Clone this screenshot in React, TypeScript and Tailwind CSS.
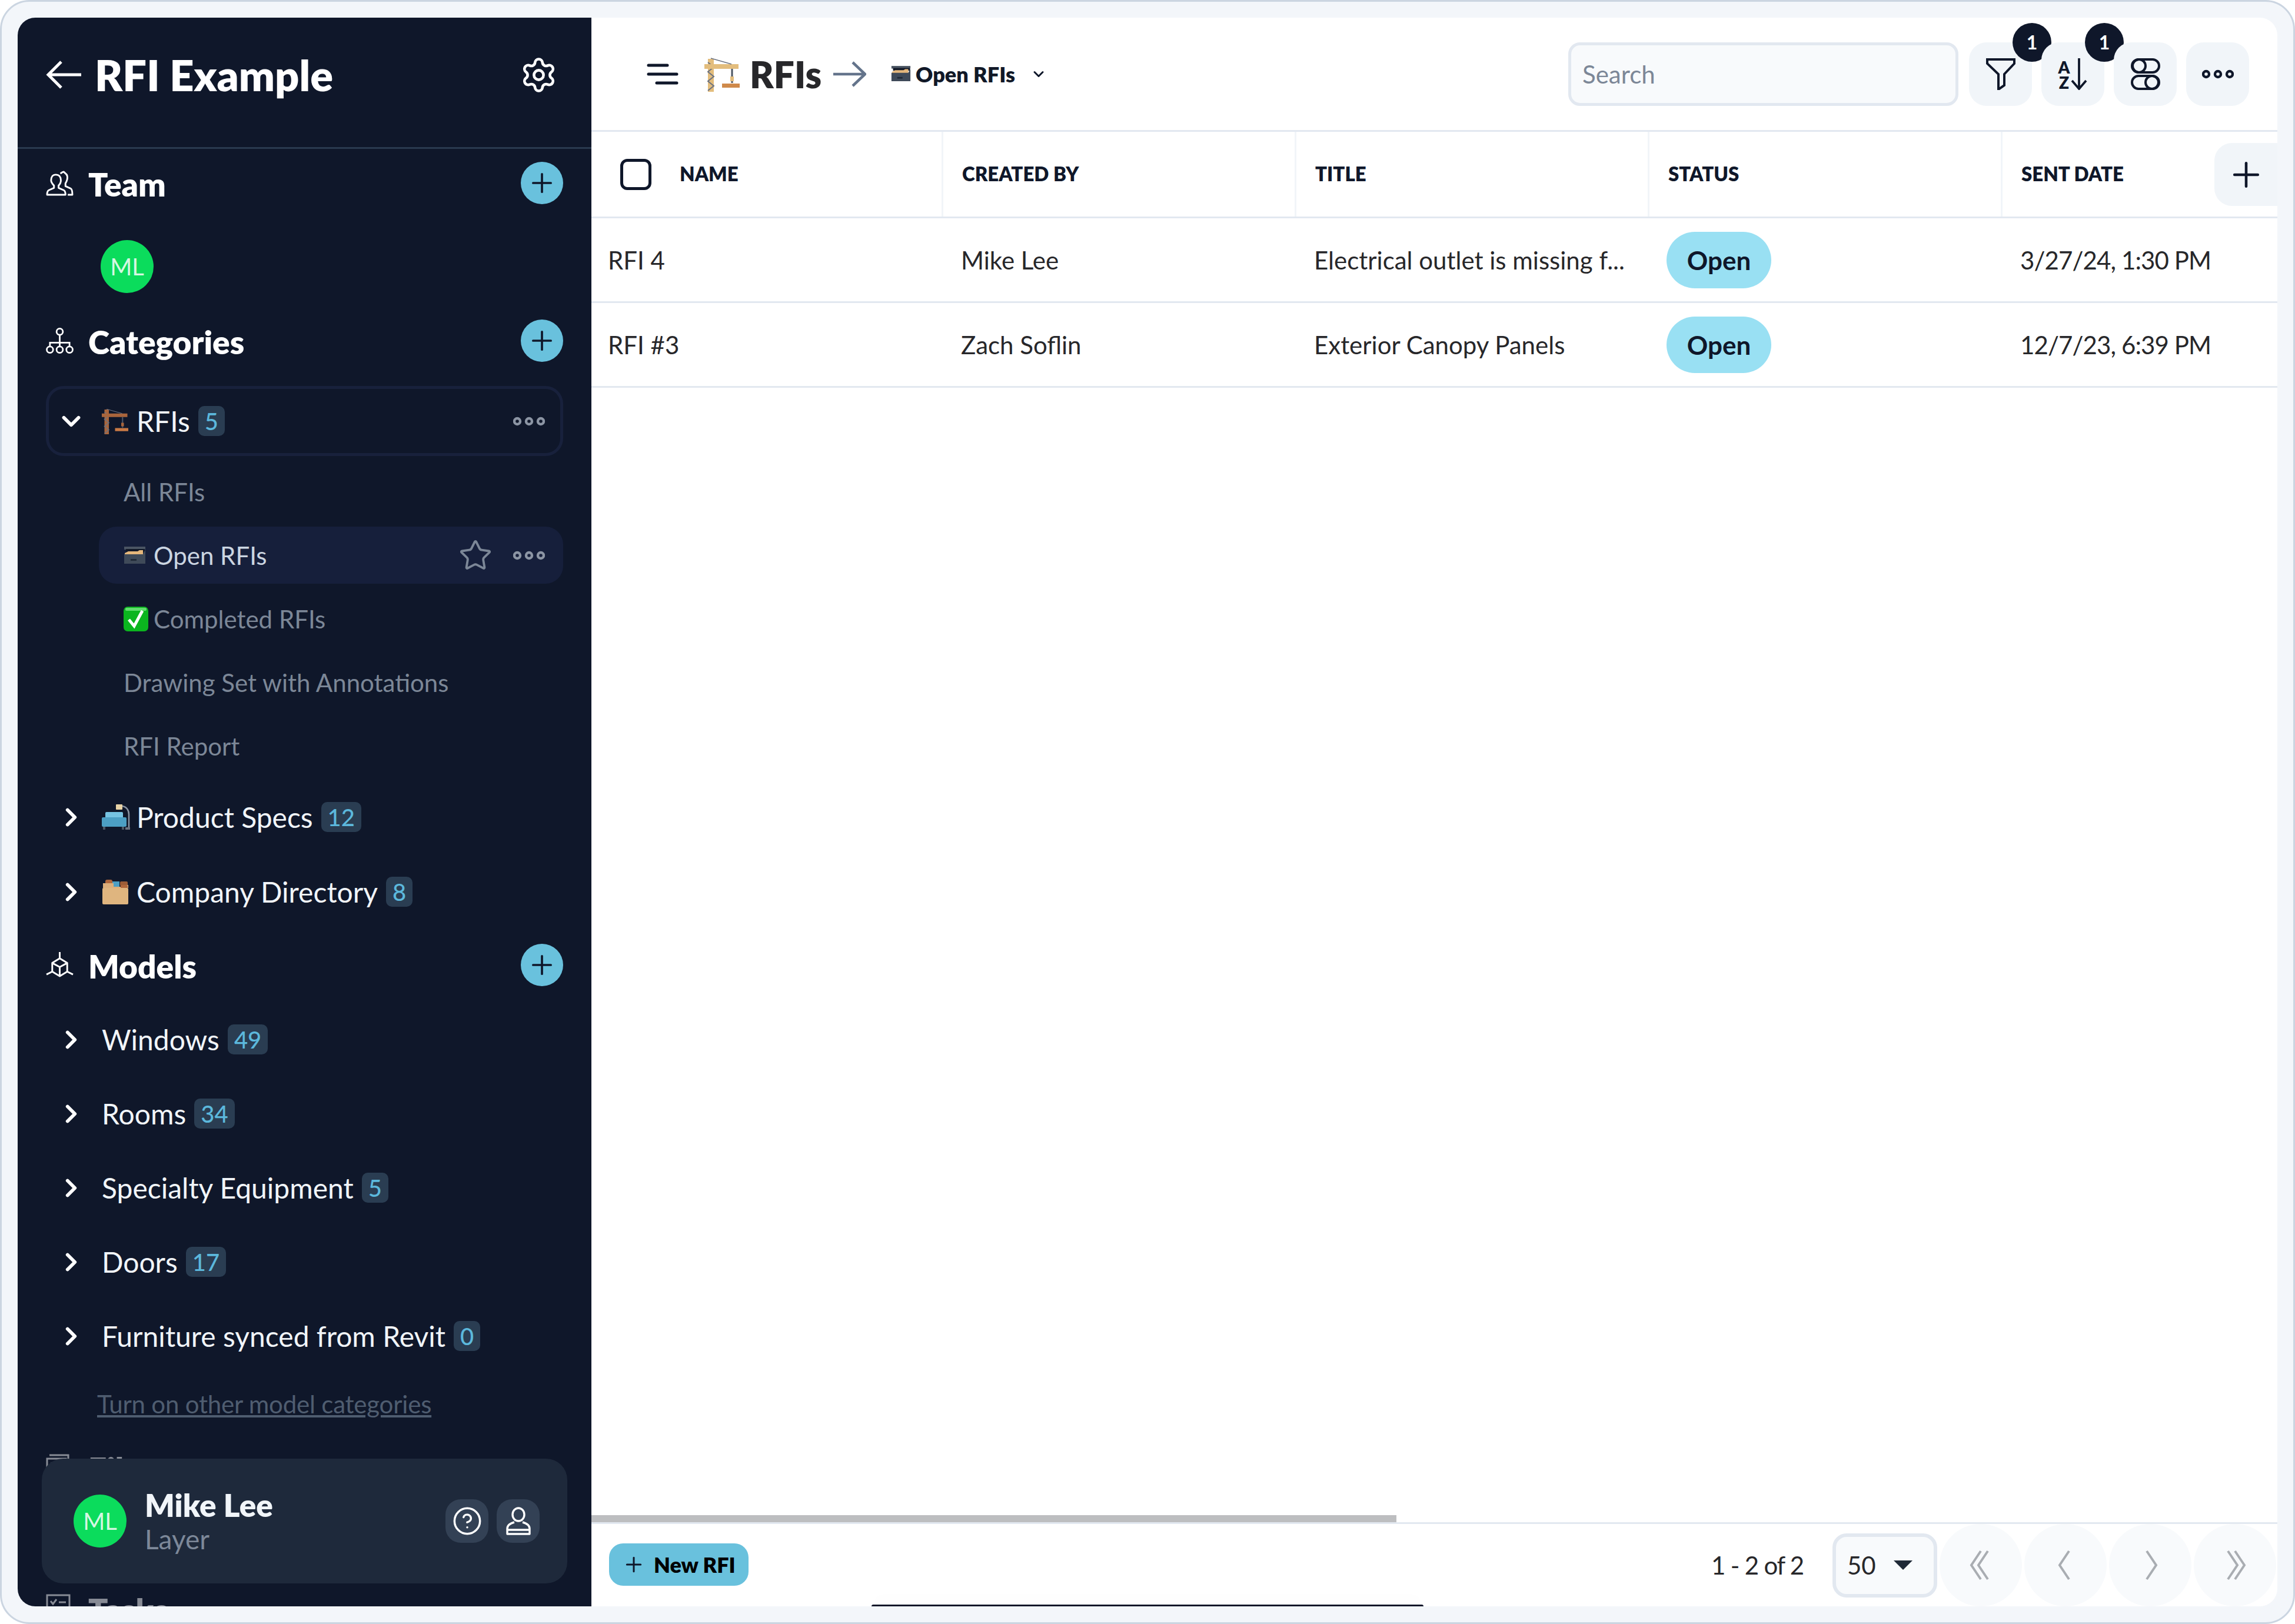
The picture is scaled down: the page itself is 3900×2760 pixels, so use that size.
import { ChevronDown, ChevronRight, CircleHelp, Plus, Settings, Star } from 'lucide-react';
import type { ReactNode } from 'react';

function Crane({ mast = '#a9653c', load = '#c87a45', className = 'w-[45px] h-[45px]' }: { mast?: string; load?: string; className?: string }) {
  return (
    <svg viewBox="0 0 60 60" className={`${className} shrink-0`}>
      <rect x="6" y="4" width="10" height="56" fill={mast} />
      <path d="M6 10l10 8M16 18L6 26l10 8-10 8 10 8-10 8" stroke="#6b7280" strokeWidth="2" fill="none" />
      <rect x="0" y="13" width="58" height="8" fill={mast} />
      <path d="M11 3L46 13" stroke="#6b7280" strokeWidth="1.5" />
      <path d="M47 21v24" stroke="#4b5563" strokeWidth="3" />
      <rect x="44" y="34" width="6" height="8" fill={mast} />
      <rect x="30" y="46" width="31" height="7" fill={load} />
    </svg>
  );
}

function FileBox({ className }: { className: string }) {
  return (
    <svg viewBox="0 0 38 32" className={className}>
      <rect x="1" y="1" width="36" height="5" fill="#4b5563" />
      <rect x="4" y="5" width="32" height="5" fill="#111827" />
      <path d="M2 12l6-3h16l3-2h6v8H2z" fill="#e5b77c" />
      <path d="M1 14h32l4-8v24H1z" fill="#3f4a59" />
      <rect x="12" y="22" width="10" height="3" fill="#1f2937" />
    </svg>
  );
}

function Couch() {
  return (
    <svg viewBox="0 0 48 46" className="w-[48px] h-[46px] shrink-0">
      <rect x="24" y="1" width="11" height="9" rx="1" fill="#e8d3a6" />
      <path d="M35 4c7 1 11 7 11 14v24" stroke="#8a94a3" strokeWidth="2.5" fill="none" />
      <rect x="40" y="40" width="8" height="4" fill="#6b7280" />
      <rect x="6" y="14" width="30" height="16" rx="2" fill="#76c3e2" />
      <rect x="0" y="23" width="42" height="16" rx="2" fill="#4c9fc4" />
      <rect x="2" y="39" width="4" height="5" fill="#4b5563" />
      <rect x="34" y="39" width="4" height="5" fill="#4b5563" />
    </svg>
  );
}

function Box() {
  return (
    <svg viewBox="0 0 46 42" className="w-[46px] h-[42px] shrink-0">
      <rect x="6" y="0" width="12" height="8" rx="3" fill="#b0673c" />
      <rect x="18" y="3" width="12" height="12" fill="#4c9fc4" />
      <rect x="31" y="3" width="13" height="8" rx="2" fill="#9c5c36" />
      <path d="M2 6l18 0v6h14l2-3h9v5H2z" fill="#dcae7a" />
      <rect x="32" y="9" width="12" height="7" rx="2" fill="#b0673c" />
      <rect x="1" y="14" width="44" height="28" rx="2" fill="#dfb57f" />
    </svg>
  );
}

function CheckEmoji() {
  return (
    <svg viewBox="0 0 42 42" className="w-[42px] h-[42px] shrink-0">
      <rect x="0" y="0" width="42" height="42" rx="7" fill="#0bb51f" />
      <rect x="3" y="2" width="36" height="5" rx="2" fill="#62dd6e" />
      <path d="M9 22l9 11 14-26" stroke="#fff" strokeWidth="5" fill="none" />
    </svg>
  );
}

function Dots({ color = '#8c95a4' }: { color?: string }) {
  return (
    <svg viewBox="0 0 54 16" className="w-[54px] h-[16px] shrink-0" fill="none" stroke={color} strokeWidth="4.4">
      <circle cx="7" cy="8" r="5" />
      <circle cx="27" cy="8" r="5" />
      <circle cx="47" cy="8" r="5" />
    </svg>
  );
}

function TeamIcon() {
  return (
    <svg viewBox="0 0 48 44" className="w-[47px] h-[43px] shrink-0" fill="none" stroke="#fff" strokeWidth="3" strokeLinejoin="round">
      <path d="M17 7c6 0 9 4 9 10 0 4-2 7-4 9v4l9 4c2 1 3 4 3 8H2c0-4 1-7 3-8l9-4v-4c-2-2-5-5-5-9 0-6 3-10 8-10z" />
      <path d="M25 5c2-1 4-3 6-3 1 2 5 3 6 7 1 5-1 10-3 13v5l9 4c2 1 3 4 3 11h-8" />
    </svg>
  );
}

function TreeIcon() {
  return (
    <svg viewBox="0 0 48 46" className="w-[47px] h-[45px] shrink-0" fill="none" stroke="#fff" strokeWidth="2.8">
      <circle cx="24" cy="7" r="5.5" />
      <path d="M24 13v13M7 32v-6h34v6M24 26v6" />
      <circle cx="7" cy="38" r="5.5" />
      <circle cx="24" cy="38" r="5.5" />
      <circle cx="41" cy="38" r="5.5" />
    </svg>
  );
}

function CubeIcon() {
  return (
    <svg viewBox="0 0 48 46" className="w-[47px] h-[45px] shrink-0" fill="none" stroke="#fff" strokeWidth="3" strokeLinejoin="round">
      <path d="M24 0v11M24 11l13 8v15l-13 8-13-8V19zM11 19l13 7 13-7M24 26v16M11 34l-10 5M37 34l10 5" />
    </svg>
  );
}

function SectionHeader({ icon, label, add = true, dim, mt }: { icon: ReactNode; label: string; add?: boolean; dim?: boolean; mt: string }) {
  return (
    <div className={`flex items-center h-[72px] shrink-0 ${mt} ${dim ? 'opacity-50' : ''}`}>
      <div className="w-[72px] shrink-0">{icon}</div>
      <span className="pt-[5px] text-[55px] font-extrabold text-white leading-none">{label}</span>
      {add && (
        <div className="ml-auto w-[72px] h-[72px] rounded-full bg-[#69c1dd] flex items-center justify-center">
          <Plus size={52} strokeWidth={1.7} className="text-[#0f172a]" />
        </div>
      )}
    </div>
  );
}

function Count({ n }: { n: number }) {
  return (
    <span className="ml-[14px] h-[51px] px-[11px] min-w-[45px] flex items-center justify-center rounded-[10px] bg-[#2a3d52] text-[#5cb8dc] text-[40px] font-medium leading-none">
      {n}
    </span>
  );
}

function TreeRow({ label, count, emoji, open }: { label: string; count: number; emoji?: ReactNode; open?: boolean }) {
  return (
    <div className={`flex items-center h-[119px] shrink-0 rounded-[30px] border-[5px] pr-[26px] ${open ? 'border-[#18213c]' : 'border-transparent'}`}>
      <div className="w-[90px] shrink-0 flex justify-center pr-[14px]">
        {open ? <ChevronDown size={50} strokeWidth={2.8} className="text-white" /> : <ChevronRight size={50} strokeWidth={2.8} className="text-white" />}
      </div>
      {emoji && <div className="w-[59px] shrink-0">{emoji}</div>}
      <span className="text-[48px] text-[#f1f5f9] leading-none">{label}</span>
      <Count n={count} />
      {open && <div className="ml-auto"><Dots /></div>}
    </div>
  );
}

function SubRow({ label, emoji, active }: { label: string; emoji?: ReactNode; active?: boolean }) {
  return (
    <div className={`flex items-center h-[97px] ml-[90px] pl-[42px] pr-[31px] rounded-[30px] ${active ? 'bg-[#161f3b]' : ''}`}>
      {emoji && <div className="w-[51px] shrink-0">{emoji}</div>}
      <span className={`text-[42px] leading-none ${active ? 'text-[#cbd5e1]' : 'text-[#7c8797]'}`}>{label}</span>
      {active && (
        <div className="ml-auto flex items-center gap-[35px]">
          <Star size={58} strokeWidth={1.6} className="text-[#7c8797]" />
          <Dots />
        </div>
      )}
    </div>
  );
}

function Avatar() {
  return (
    <div className="w-[90px] h-[90px] rounded-full bg-[#0bdc5c] flex items-center justify-center text-[40px] text-[#d5f7e2] leading-none">ML</div>
  );
}

function Sidebar() {
  return (
    <aside className="relative w-[975px] shrink-0 bg-[#0f172a] rounded-l-[30px] overflow-hidden flex flex-col">
      <div className="flex items-center h-[223px] shrink-0 border-b-[3px] border-[#2a3a4f] pl-[48px] pr-[57px] pb-[26px]">
        <svg viewBox="0 0 60 48" className="w-[60px] h-[48px] shrink-0" fill="none" stroke="#fff" strokeWidth="5">
          <path d="M5 24h55M26 2L4 24l22 22" />
        </svg>
        <span className="ml-[23px] text-[72px] font-extrabold text-white leading-none">RFI Example</span>
        <Settings size={65} strokeWidth={1.7} className="ml-auto text-white" />
      </div>
      <div className="flex flex-col px-[48px]">
        <SectionHeader icon={<TeamIcon />} label="Team" mt="mt-[22px]" />
        <div className="mt-[61px] ml-[93px]"><Avatar /></div>
        <SectionHeader icon={<TreeIcon />} label="Categories" mt="mt-[45px]" />
        <div className="mt-[41px]"><TreeRow label="RFIs" count={5} emoji={<Crane />} open /></div>
        <div className="mt-[12px] flex flex-col gap-[11px]">
          <SubRow label="All RFIs" />
          <SubRow label="Open RFIs" active emoji={<FileBox className="w-[38px] h-[32px]" />} />
          <SubRow label="Completed RFIs" emoji={<CheckEmoji />} />
          <SubRow label="Drawing Set with Annotations" />
          <SubRow label="RFI Report" />
        </div>
        <div className="mt-[13px] flex flex-col gap-[8px]">
          <TreeRow label="Product Specs" count={12} emoji={<Couch />} />
          <TreeRow label="Company Directory" count={8} emoji={<Box />} />
        </div>
        <SectionHeader icon={<CubeIcon />} label="Models" mt="mt-[29px]" />
        <div className="mt-[31px] flex flex-col gap-[7px]">
          <TreeRow label="Windows" count={49} />
          <TreeRow label="Rooms" count={34} />
          <TreeRow label="Specialty Equipment" count={5} />
          <TreeRow label="Doors" count={17} />
          <TreeRow label="Furniture synced from Revit" count={0} />
        </div>
        <div className="mt-[26px] h-[60px] pl-[87px] flex items-center">
          <span className="text-[42px] tracking-[-0.2px] text-[#4f5d70] underline leading-none">Turn on other model categories</span>
        </div>
        <SectionHeader
          icon={
            <svg viewBox="0 0 42 46" className="w-[42px] h-[46px]" fill="none" stroke="#fff" strokeWidth="3">
              <path d="M6 2h32v34M2 8h32v36H2zM8 16h20" />
            </svg>
          }
          label="Files"
          add={false}
          dim
          mt="mt-[42px]"
        />
        <SectionHeader
          icon={
            <svg viewBox="0 0 42 50" className="w-[42px] h-[50px]" fill="none" stroke="#fff" strokeWidth="3">
              <rect x="2" y="2" width="38" height="46" />
              <path d="M8 12l4 5 6-8M22 14h12M8 26l4 5 6-8M22 28h12" />
            </svg>
          }
          label="Tasks"
          add={false}
          dim
          mt="mt-[168px]"
        />
      </div>

      <div className="absolute left-[41px] top-[2449px] w-[893px] h-[212px] rounded-[36px] bg-[#1e293b] flex items-center pl-[54px] pr-[47px]">
        <Avatar />
        <div className="ml-[31px] flex flex-col">
          <span className="text-[53px] font-extrabold text-[#f1f5f9] leading-[62px]">Mike Lee</span>
          <span className="text-[46px] text-[#7d8899] leading-[54px]">Layer</span>
        </div>
        <div className="ml-auto flex gap-[14px]">
          <div className="w-[73px] h-[74px] rounded-[26px] bg-[#334155] flex items-center justify-center">
            <CircleHelp size={52} strokeWidth={1.6} className="text-white" />
          </div>
          <div className="w-[73px] h-[74px] rounded-[26px] bg-[#334155] flex items-center justify-center">
            <svg viewBox="0 0 44 48" className="w-[44px] h-[48px]" fill="none" stroke="#fff" strokeWidth="3.4" strokeLinejoin="round">
              <ellipse cx="22" cy="13" rx="10" ry="11" />
              <path d="M15 26c-7 2-12 6-12 11v9h38v-9c0-5-5-9-12-11" />
              <path d="M3 39h38" />
            </svg>
          </div>
        </div>
      </div>
    </aside>
  );
}

function ToolButton({ children, badge }: { children: ReactNode; badge?: boolean }) {
  return (
    <div className="relative w-[107px] h-[108px] rounded-[30px] bg-[#f1f5f9] flex items-center justify-center">
      {children}
      {badge && (
        <span className="absolute -right-[33px] -top-[33px] w-[66px] h-[66px] rounded-full bg-[#0f172a] text-white text-[32px] font-bold flex items-center justify-center leading-none">1</span>
      )}
    </div>
  );
}

function Toolbar() {
  return (
    <div className="flex items-center h-[194px] shrink-0 pl-[94px] pr-[48px] border-b-[3px] border-[#e2e8f0]">
      <svg viewBox="0 0 54 36" className="w-[54px] h-[36px] shrink-0" fill="none" stroke="#0f172a" strokeWidth="5" strokeLinecap="round">
        <path d="M3 3h32M3 18h48M17 33h34" />
      </svg>
      <div className="ml-[44px]"><Crane mast="#e3bd7d" load="#cf8a4b" className="w-[60px] h-[60px]" /></div>
      <span className="ml-[17px] text-[62px] font-extrabold text-[#27272a] leading-none">RFIs</span>
      <svg viewBox="0 0 56 44" className="ml-[20px] w-[56px] h-[44px] shrink-0" fill="none" stroke="#64748b" strokeWidth="4.5">
        <path d="M0 22h52M33 2l21 20-21 20" />
      </svg>
      <div className="ml-[42px]"><FileBox className="w-[34px] h-[29px]" /></div>
      <span className="ml-[8px] text-[36px] font-extrabold text-[#111827] leading-none">Open RFIs</span>
      <ChevronDown size={28} strokeWidth={2.6} className="ml-[26px] text-[#0f172a]" />
      <div className="ml-auto w-[663px] h-[108px] rounded-[20px] border-[5px] border-[#e2e8f0] bg-[#f8fafc] flex items-center pl-[19px]">
        <span className="text-[42px] text-[#7c8797] leading-none">Search</span>
      </div>
      <div className="ml-[18px] flex gap-[16px]">
        <ToolButton badge>
          <svg viewBox="0 0 50 54" className="w-[50px] h-[54px]" fill="none" stroke="#0f172a" strokeWidth="4">
            <path d="M2 2h46v7L31 27v19l-10 7V27L2 9z" />
          </svg>
        </ToolButton>
        <ToolButton badge>
          <div className="flex items-end gap-[2px]">
            <div className="flex flex-col items-center text-[28px] font-extrabold text-[#0f172a] leading-[26px]">
              <span>A</span>
              <span>Z</span>
            </div>
            <svg viewBox="0 0 28 54" className="w-[28px] h-[54px]" fill="none" stroke="#0f172a" strokeWidth="3.8">
              <path d="M14 0v52M2 38l12 14 12-14" />
            </svg>
          </div>
        </ToolButton>
        <ToolButton>
          <svg viewBox="0 0 50 54" className="w-[50px] h-[54px]" fill="none" stroke="#0f172a" strokeWidth="4">
            <rect x="2" y="2" width="46" height="22" rx="11" />
            <circle cx="14" cy="13" r="11" />
            <rect x="2" y="30" width="46" height="22" rx="11" />
            <circle cx="36" cy="41" r="11" />
          </svg>
        </ToolButton>
        <ToolButton><Dots color="#0f172a" /></ToolButton>
      </div>
    </div>
  );
}

const rows = [
  { name: 'RFI 4', by: 'Mike Lee', title: 'Electrical outlet is missing f...', sent: '3/27/24, 1:30 PM' },
  { name: 'RFI #3', by: 'Zach Soflin', title: 'Exterior Canopy Panels', sent: '12/7/23, 6:39 PM' },
];

function HeadCell({ label, last }: { label: string; last?: boolean }) {
  return (
    <div className={`w-[600px] shrink-0 pl-[32px] flex items-center text-[33px] font-extrabold text-[#0f172a] ${last ? '' : 'border-r-[3px] border-[#f1f5f9]'}`}>
      {label}
    </div>
  );
}

function Table() {
  return (
    <div className="flex-1 flex flex-col min-h-0">
      <div className="relative flex h-[147px] shrink-0 border-b-[3px] border-[#e2e8f0]">
        <div className="w-[598px] shrink-0 flex items-center pl-[49px] gap-[48px] text-[33px] font-extrabold text-[#0f172a] border-r-[3px] border-[#f1f5f9]">
          <div className="w-[53px] h-[53px] rounded-[12px] border-[5px] border-[#0f172a]" />
          NAME
        </div>
        <HeadCell label="CREATED BY" />
        <HeadCell label="TITLE" />
        <HeadCell label="STATUS" />
        <HeadCell label="SENT DATE" last />
        <div className="absolute right-0 top-[19px] w-[107px] h-[107px] rounded-l-[30px] bg-[#f1f5f9] flex items-center justify-center">
          <Plus size={68} strokeWidth={1.6} className="text-[#0f172a]" />
        </div>
      </div>
      {rows.map(r => (
        <div key={r.name} className="flex h-[144px] shrink-0 items-center border-b-[3px] border-[#e2e8f0] text-[42px] text-[#27272a] leading-none">
          <div className="w-[598px] shrink-0 pl-[28px]">{r.name}</div>
          <div className="w-[600px] shrink-0 pl-[30px]">{r.by}</div>
          <div className="w-[600px] shrink-0 pl-[30px]">{r.title}</div>
          <div className="w-[600px] shrink-0 pl-[29px]">
            <span className="w-[178px] h-[96px] rounded-[48px] bg-[#99e0f3] flex items-center justify-center text-[44px] font-bold text-[#0f172a]">Open</span>
          </div>
          <div className="w-[600px] shrink-0 pl-[30px] tracking-[-0.9px]">{r.sent}</div>
        </div>
      ))}
      <div className="mt-auto h-[12px] w-[1368px] bg-[#bdbec0] shrink-0" />
    </div>
  );
}

function PageButton({ d }: { d: string }) {
  return (
    <div className="w-[140px] h-[140px] rounded-full bg-[#f8fafc] flex items-center justify-center">
      <svg viewBox="0 0 48 52" className="w-[48px] h-[52px]" fill="none" stroke="#a9adb2" strokeWidth="4">
        <path d={d} />
      </svg>
    </div>
  );
}

function Footer() {
  return (
    <div className="relative flex items-center h-[143px] shrink-0 border-t-[3px] border-[#e2e8f0] pl-[30px] pr-[2px]">
      <div className="w-[237px] h-[72px] mt-[-3px] rounded-[24px] bg-[#69c1dd] flex items-center pl-[22px] gap-[14px] text-[36px] font-extrabold text-black leading-none">
        <Plus size={40} strokeWidth={1.8} className="text-[#0f172a]" />
        New RFI
      </div>
      <span className="ml-auto text-[42px] tracking-[-1.2px] text-[#27272a] leading-none">1 - 2 of 2</span>
      <div className="ml-[49px] w-[178px] h-[109px] rounded-[24px] border-[6px] border-[#e2e8f0] bg-[#f8fafc] flex items-center pl-[19px] text-[42px] text-[#27272a] leading-none">
        50
        <svg viewBox="0 0 32 16" className="ml-[30px] w-[32px] h-[16px]" fill="#1f2937">
          <path d="M0 0h32L16 16z" />
        </svg>
      </div>
      <div className="ml-[4px] flex gap-[4px]">
        <PageButton d="M24 2L8 26l16 24M36 2L20 26l16 24" />
        <PageButton d="M30 2L14 26l16 24" />
        <PageButton d="M18 2l16 24-16 24" />
        <PageButton d="M12 2l16 24-16 24M24 2l16 24-16 24" />
      </div>
      <div className="absolute left-[476px] bottom-0 w-[938px] h-[3px] rounded-t-[4px] bg-[#0f172a] shadow-[0_-8px_24px_rgba(15,23,42,0.06)]" />
    </div>
  );
}

export default function App() {
  return (
    <div className="w-[3900px] h-[2760px] bg-white [font-family:Lato,sans-serif]">
      <div className="w-full h-full flex p-[27px] pr-[27px] rounded-[50px] border-[3px] border-[#cbd5e1] bg-[#f3f6fa]">
        <Sidebar />
        <main className="flex-1 min-w-0 flex flex-col bg-white rounded-r-[30px] overflow-hidden">
          <Toolbar />
          <Table />
          <Footer />
        </main>
      </div>
    </div>
  );
}
